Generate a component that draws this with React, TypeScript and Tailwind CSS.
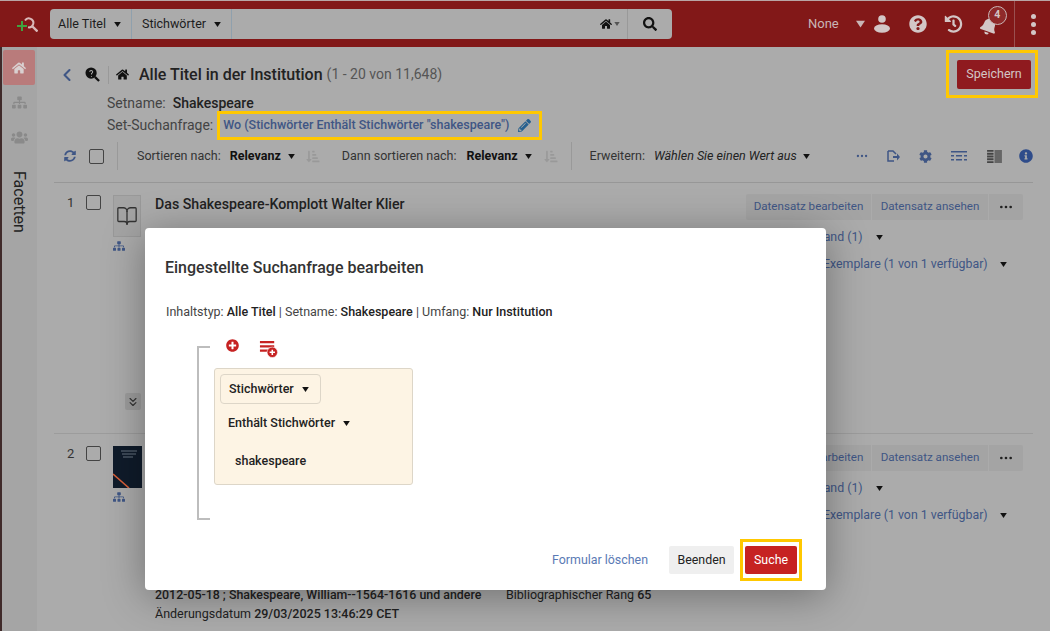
import { BookOpen, ChevronLeft, ChevronsDown, Ellipsis } from "lucide-react";
import type { ReactNode } from "react";
import {
  FaBell,
  FaCog,
  FaHistory,
  FaHome,
  FaInfoCircle,
  FaPencilAlt,
  FaPlusCircle,
  FaQuestionCircle,
  FaSearch,
  FaSitemap,
  FaSortAmountDownAlt,
  FaSyncAlt,
  FaUsers,
} from "react-icons/fa";

const Caret = ({ className = "w-[7px] h-[5px] text-[#111]" }: { className?: string }) => (
  <svg viewBox="0 0 8 6" className={"shrink-0 " + className}>
    <path d="M0 0h8L4 6z" fill="currentColor" />
  </svg>
);

const Checkbox = () => <div className="w-[15px] h-[15px] rounded-[2px] border-[1.5px] border-[#444]" />;

const Logo = () => (
  <svg viewBox="0 0 21 15" className="w-[21px] h-[15px]">
    <path d="M0 9h10M5 4v10" stroke="#3fa33f" strokeWidth="2" fill="none" />
    <path d="M8 3.500a4.500 4.500 0 1 1 3 6.800" stroke="#d9b8b8" strokeWidth="2" fill="none" />
    <path d="M15.500 9.500l5 5" stroke="#d9b8b8" strokeWidth="2.4" fill="none" />
  </svg>
);

const User = () => (
  <svg viewBox="0 0 16 18" className="w-[16px] h-[18px] text-[#d3c6c6]">
    <circle cx="8" cy="4" r="3.800" fill="currentColor" />
    <ellipse cx="8" cy="13.500" rx="8" ry="4.200" fill="currentColor" />
  </svg>
);

const AddRow = () => (
  <svg viewBox="0 0 20 20" className="w-[19px] h-[19px] text-[#c62222]">
    <path d="M1 2h15v2.500H1zM1 6.500h15V9H1zM1 11h9v2.500H1z" fill="currentColor" />
    <circle cx="14" cy="14" r="5.500" fill="currentColor" stroke="#fff" strokeWidth="0.6" />
    <path d="M14 11.200v5.600M11.200 14h5.600" stroke="#fff" strokeWidth="1.600" />
  </svg>
);

const LensBlack = () => (
  <svg viewBox="0 0 16 16" className="w-[15px] h-[15px]">
    <circle cx="6.500" cy="6.500" r="6" fill="#111" />
    <path d="M5 5.200a1.600 1.600 0 1 1 2 1.600v1.200M6.900 9.500v1" stroke="#ababab" strokeWidth="1.100" fill="none" />
    <path d="M10.500 10.500l4.500 4.500" stroke="#111" strokeWidth="2.400" />
  </svg>
);

const Cover = () => (
  <svg viewBox="0 0 29 42" className="w-[29px] h-[42px]">
    <rect width="29" height="42" fill="#0f1b2a" />
    <path d="M8 5h16M9 8h14M10 11h10" stroke="#7f8a98" strokeWidth="0.8" />
    <path d="M0 28l16 14" stroke="#d9603a" strokeWidth="1.600" />
  </svg>
);

const ResultRow = ({
  index,
  thumb,
  children,
}: {
  index: number;
  thumb: ReactNode;
  children?: ReactNode;
}) => (
  <div className="h-[251px] shrink-0 border-b border-[#9c9c9c] flex justify-between">
    <div className="flex pt-[12px]">
      <span className="w-[32px] pl-[13px] text-[13px] leading-[16px] text-[#333]">{index}</span>
      <div className="w-[27px]">
        <Checkbox />
      </div>
      <div className="w-[42px] flex flex-col items-start">
        {thumb}
        <FaSitemap className="w-[12px] h-[12px] mt-[3px] text-[#3f5685]" />
      </div>
      {children}
    </div>
    <div className="mr-[10px] flex flex-col items-end pt-[11px]">
      <div className="flex h-[26px] gap-[1px] text-[11.6px] text-[#3f5685]">
        <span className="w-[125px] flex items-center justify-center bg-[#a4a4a4] rounded-l-[2px]">Datensatz bearbeiten</span>
        <span className="w-[116px] flex items-center justify-center bg-[#a4a4a4]">Datensatz ansehen</span>
        <span className="w-[34px] flex items-center justify-center bg-[#a4a4a4] rounded-r-[2px] text-[#222]">
          <Ellipsis className="w-[16px] h-[16px]" />
        </span>
      </div>
      <div className="w-[276px] mt-[7px] text-[12.35px] text-[#3f5685] whitespace-nowrap">
        <div className="h-[20px] flex items-center gap-[13px] pl-[52px]">
          Bestand (1) <Caret />
        </div>
        <div className="mt-[7px] h-[20px] flex items-center gap-[12px] pl-[17px]">
          Physische Exemplare (1 von 1 verfügbar) <Caret />
        </div>
      </div>
    </div>
  </div>
);

export default function App() {
  return (
    <div className="relative w-[1050px] h-[631px] overflow-hidden flex flex-col bg-[#ababab] font-['Roboto',sans-serif]">
      {/* top bar */}
      <header className="h-[47px] shrink-0 bg-[#821818] border-t border-[#b9a5a5] flex items-center">
        <div className="w-[50px] flex justify-center pl-[5px]">
          <Logo />
        </div>
        <div className="w-[622px] h-[30px] flex bg-[#ababab] rounded-[4px] text-[12.5px] text-[#1c1c1c]">
          <div className="w-[82px] flex items-center gap-[8px] pl-[8px] border-r border-[#8fa0ad]">
            Alle Titel <Caret />
          </div>
          <div className="w-[100px] flex items-center gap-[8px] pl-[10px] border-r border-[#8fa0ad]">
            Stichwörter <Caret />
          </div>
          <div className="flex-1 flex items-center justify-end gap-[2px] pr-[7px]">
            <FaHome className="w-[12px] h-[12px] text-[#111]" />
            <Caret className="w-[6px] h-[4px] text-[#555]" />
          </div>
          <div className="w-[45px] flex items-center justify-center border-l border-[#999]">
            <FaSearch className="w-[14px] h-[14px] text-[#111]" />
          </div>
        </div>
        <div className="flex-1 h-full flex items-center text-[#d3c6c6]">
          <span className="ml-[136px] text-[13px] text-[#c9b6b6]">None</span>
          <Caret className="ml-[17px] w-[9px] h-[8px] text-[#c9b6b6]" />
          <div className="ml-[9px]">
            <User />
          </div>
          <FaQuestionCircle className="ml-[19px] w-[18px] h-[18px]" />
          <FaHistory className="ml-[17px] w-[19px] h-[18px]" />
          <div className="relative ml-[17px]">
            <FaBell className="w-[18px] h-[18px] rotate-[20deg] mt-[3px]" />
            <span className="absolute -top-[8px] left-[8px] w-[19px] h-[19px] rounded-full bg-[#8f2a2a] border border-[#c9b6b6] text-[10.5px] font-bold flex items-center justify-center">
              4
            </span>
          </div>
          <div className="ml-[16px] h-full border-l border-[#9a5050]" />
          <div className="ml-[16px] flex flex-col gap-[3px]">
            <span className="w-[5px] h-[5px] rounded-full bg-[#d3c6c6]" />
            <span className="w-[5px] h-[5px] rounded-full bg-[#d3c6c6]" />
            <span className="w-[5px] h-[5px] rounded-full bg-[#d3c6c6]" />
          </div>
        </div>
      </header>

      <div className="flex flex-1 min-h-0">
        {/* left rail */}
        <aside className="w-[37px] shrink-0 bg-[#a5a5a5] border-l-[2px] border-[#3f2a2a] flex flex-col items-start">
          <div className="mt-[3px] ml-[1px] w-[32px] h-[35px] rounded-[2px] bg-[#b97b7b] flex items-center justify-center">
            <FaHome className="w-[14px] h-[14px] text-[#d9d0d0]" />
          </div>
          <div className="w-[34px] h-[35px] flex items-center justify-center">
            <FaSitemap className="w-[15px] h-[15px] text-[#8a8a8a]" />
          </div>
          <div className="w-[34px] h-[35px] flex items-center justify-center">
            <FaUsers className="w-[17px] h-[17px] text-[#8a8a8a]" />
          </div>
          <div className="w-[34px] flex justify-center mt-[16px]">
            <span className="[writing-mode:vertical-rl] text-[16px] leading-[18px] text-[#222]">Facetten</span>
          </div>
        </aside>

        <main className="flex-1 min-w-0 pl-[17px] pr-[17px] flex flex-col">
          <div className="mt-[13px] h-[29px] shrink-0 flex items-center justify-between">
            <div className="flex items-center">
              <ChevronLeft className="ml-[3px] w-[20px] h-[20px] text-[#3f5685]" strokeWidth={2.5} />
              <div className="ml-[8px]">
                <LensBlack />
              </div>
              <div className="ml-[8px] h-[18px] border-l border-[#999]" />
              <FaHome className="ml-[7px] w-[13px] h-[13px] text-[#111]" />
              <h1 className="ml-[10px] text-[16px] font-medium text-[#222]">Alle Titel in der Institution</h1>
              <span className="ml-[4px] text-[14px] text-[#555]">(1 - 20 von 11,648)</span>
            </div>
            <button className="relative mr-[2px] w-[74px] h-[29px] rounded-[2px] bg-[#8f1a1f] text-[12.5px] text-[#d3c6c6]">
              Speichern
              <span className="absolute -left-[11px] -right-[7px] -top-[10px] -bottom-[9px] border-[3px] border-[#ffc800]" />
            </button>
          </div>

          <div className="mt-[5px] ml-[53px] h-[18px] shrink-0 flex items-center gap-[7px] text-[14px] text-[#444]">
            Setname: <b className="font-medium text-[#222]">Shakespeare</b>
          </div>
          <div className="-mt-[1px] ml-[53px] h-[29px] shrink-0 flex items-center gap-[4px] text-[14px] text-[#444]">
            Set-Suchanfrage:
            <div className="h-[29px] w-[325px] flex items-center gap-[9px] border-[3px] border-[#ffc800] pl-[3px] text-[12.5px] font-medium text-[#3f5685]">
              Wo (Stichwörter Enthält Stichwörter "shakespeare")
              <FaPencilAlt className="w-[13px] h-[13px] text-[#25608f]" />
            </div>
          </div>

          {/* toolbar */}
          <div className="mt-[2px] h-[28px] shrink-0 flex items-center whitespace-nowrap text-[12.5px] text-[#333]">
            <FaSyncAlt className="ml-[10px] w-[12px] h-[12px] text-[#3f5685]" />
            <div className="ml-[13px]">
              <Checkbox />
            </div>
            <div className="ml-[13px] h-[28px] border-l border-[#999]" />
            <span className="ml-[19px]">Sortieren nach:</span>
            <b className="ml-[9px] font-bold text-[#111]">Relevanz</b>
            <Caret className="ml-[7px] w-[7px] h-[5px] text-[#111]" />
            <FaSortAmountDownAlt className="ml-[11px] w-[14px] h-[13px] text-[#999]" />
            <span className="ml-[22px]">Dann sortieren nach:</span>
            <b className="ml-[10px] font-bold text-[#111]">Relevanz</b>
            <Caret className="ml-[7px] w-[7px] h-[5px] text-[#111]" />
            <FaSortAmountDownAlt className="ml-[12px] w-[14px] h-[13px] text-[#999]" />
            <div className="ml-[13px] h-[28px] border-l border-[#999]" />
            <span className="ml-[18px]">Erweitern:</span>
            <i className="ml-[9px] text-[#222]">Wählen Sie einen Wert aus</i>
            <Caret className="ml-[6px] w-[7px] h-[5px] text-[#111]" />
            <Ellipsis className="ml-[45px] w-[14px] h-[14px] text-[#3f5685]" />
            <svg viewBox="0 0 14 14" className="ml-[17px] w-[14px] h-[14px] text-[#3f5685]">
              <path d="M2 2h5l3 3M2 2v10h6" stroke="currentColor" strokeWidth="1.5" fill="none" />
              <path d="M7 7h4V4.500L14 8l-3 3.500V9H7z" fill="currentColor" />
            </svg>
            <FaCog className="ml-[19px] w-[13px] h-[13px] text-[#3f5685]" />
            <svg viewBox="0 0 16 12" className="ml-[19px] w-[16px] h-[12px] text-[#3f5685]">
              <path d="M0 1h16v1.500H0zM0 5h3v1.500H0zM5 5h6v1.500H5zM13 5h3v1.500h-3zM0 9h3v1.500H0zM5 9h6v1.500H5zM13 9h3v1.500h-3z" fill="currentColor" />
            </svg>
            <svg viewBox="0 0 16 14" className="ml-[20px] w-[15px] h-[13px] text-[#444]">
              <path d="M0 0h7v2H0zM0 3h7v2H0zM0 6h7v2H0zM0 9h7v2H0zM0 12h7v2H0z" fill="currentColor" />
              <rect x="8" width="8" height="14" fill="#666" />
            </svg>
            <FaInfoCircle className="ml-[17px] w-[14px] h-[14px] text-[#2f4c8a]" />
          </div>
          <div className="mt-[12px] shrink-0 border-b border-[#979797]" />

          <ResultRow
            index={1}
            thumb={
              <div className="w-[28px] h-[42px] bg-[#a4a4a4] border border-[#999] flex items-center justify-center">
                <BookOpen className="w-[22px] h-[22px] text-[#333]" strokeWidth={1.4} />
              </div>
            }
          >
            <h2 className="pt-[1px] text-[14.2px] font-medium leading-[16px] text-[#222]">Das Shakespeare-Komplott Walter Klier</h2>
          </ResultRow>

          <ResultRow index={2} thumb={<Cover />}>
            <div className="flex flex-col pt-[139px] text-[12.5px] leading-[19px] text-[#222] whitespace-nowrap">
              <div className="flex">
                <b className="w-[351px] text-[12.4px] font-medium">2012-05-18 ; Shakespeare, William--1564-1616 und andere</b>
                <span>
                  Bibliographischer Rang <b className="font-medium">65</b>
                </span>
              </div>
              <div>
                Änderungsdatum <b className="font-medium">29/03/2025 13:46:29 CET</b>
              </div>
            </div>
          </ResultRow>
        </main>
      </div>

      {/* expand toggle of result 1 */}
      <div className="absolute left-[125px] top-[393px] w-[16px] h-[17px] rounded-[2px] bg-[#9c9c9c] flex items-center justify-center">
        <ChevronsDown className="w-[14px] h-[14px] text-[#333]" />
      </div>

      {/* modal */}
      <section className="absolute left-[145px] top-[228px] w-[681px] h-[362px] bg-white rounded-[4px] shadow-[0_6px_40px_rgba(0,0,0,0.35)] flex flex-col">
        <h3 className="mt-[30px] ml-[20px] text-[16px] leading-[19px] font-medium text-[#333]">Eingestellte Suchanfrage bearbeiten</h3>
        <p className="mt-[27px] ml-[21px] text-[12.5px] leading-[16px] text-[#444]">
          Inhaltstyp: <b className="font-medium text-[#222]">Alle Titel</b> | Setname: <b className="font-medium text-[#222]">Shakespeare</b> | Umfang: <b className="font-medium text-[#222]">Nur Institution</b>
        </p>
        <div className="mt-[18px] ml-[52px] flex">
          <div className="w-[13px] h-[174px] mt-[8px] border-[2px] border-r-0 border-[#bdbdbd]" />
          <div className="ml-[4px]">
            <div className="h-[30px] flex items-start pt-[1px] pl-[12px]">
              <FaPlusCircle className="w-[13px] h-[13px] text-[#c62222]" />
              <div className="ml-[20px]">
                <AddRow />
              </div>
            </div>
            <div className="w-[199px] h-[117px] bg-[#fdf4e4] border border-[#ddd6c8] rounded-[3px] p-[5px] text-[12.5px] font-medium text-[#222]">
              <div className="w-[101px] h-[30px] border border-[#ddd6c8] rounded-[4px] flex items-center gap-[8px] pl-[8px]">
                Stichwörter <Caret />
              </div>
              <div className="mt-[9px] h-[20px] pl-[8px] flex items-center gap-[8px]">
                Enthält Stichwörter <Caret />
              </div>
              <div className="mt-[19px] pl-[15px]">shakespeare</div>
            </div>
          </div>
        </div>
        <div className="mt-auto mb-[16px] flex items-center justify-end text-[12.4px] whitespace-nowrap">
          <span className="text-[#5a7ab5]">Formular löschen</span>
          <button className="ml-[21px] w-[65px] h-[28px] rounded-[2px] bg-[#efefef] text-[#222]">Beenden</button>
          <button className="relative ml-[11px] mr-[29px] w-[52px] h-[28px] rounded-[2px] bg-[#c62222] text-white">
            Suche
            <span className="absolute -left-[5px] -right-[5px] -top-[7px] -bottom-[7px] border-[3px] border-[#ffc800]" />
          </button>
        </div>
      </section>
    </div>
  );
}
